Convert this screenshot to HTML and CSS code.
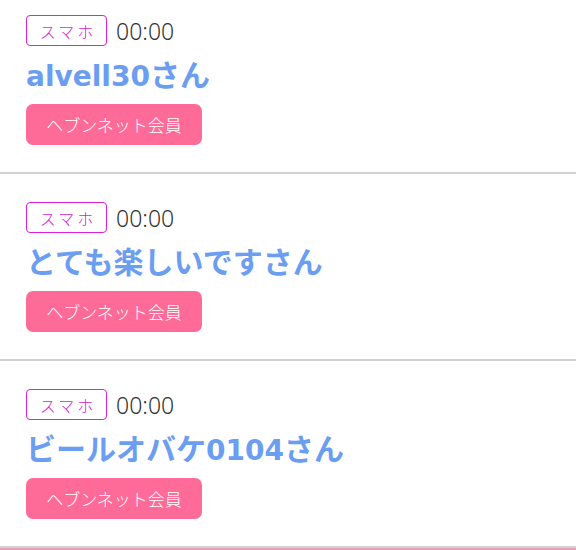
FILE: index.html
```html
<!DOCTYPE html>
<html lang="ja">
<head>
<meta charset="utf-8">
<link rel="stylesheet" href="styles.css">
</head>
<body>
<div class="list">
  <div class="item">
    <div class="meta"><span class="device">スマホ</span><span class="time">00:00</span></div>
    <div class="name"><span class="alnum">alvell30</span>さん</div>
    <div class="member">ヘブンネット会員</div>
  </div>
  <div class="item">
    <div class="meta"><span class="device">スマホ</span><span class="time">00:00</span></div>
    <div class="name">とても楽しいですさん</div>
    <div class="member">ヘブンネット会員</div>
  </div>
  <div class="item">
    <div class="meta"><span class="device">スマホ</span><span class="time">00:00</span></div>
    <div class="name">ビールオバケ<span class="alnum">0104</span>さん</div>
    <div class="member">ヘブンネット会員</div>
  </div>
  <div class="next"></div>
</div>
</body>
</html>
```
FILE: styles.css
```css
html, body {
  margin: 0;
  padding: 0;
  background: #fff;
  overflow: hidden;
}
body {
  font-family: "Noto Sans CJK JP", "Noto Sans", sans-serif;
}
.list {
  margin-top: -13px;
}
.item {
  padding: 28px 26px 27px;
  border-bottom: 2px solid #d2d2d2;
}
.meta {
  display: flex;
  align-items: center;
  gap: 9px;
  height: 31px;
}
.device {
  box-sizing: border-box;
  height: 31px;
  width: 81px;
  display: flex;
  align-items: center;
  justify-content: center;
  border: 1.5px solid #dc1ee0;
  border-radius: 4px;
  color: #d21ed6;
  font-size: 16px;
  font-weight: 300;
  letter-spacing: 3px;
  padding-left: 3px;
}
.time {
  font-size: 23px;
  font-weight: 300;
  color: #333;
  font-family: "Noto Sans", sans-serif;
}
.name {
  margin: 10px 0 14px;
  height: 34px;
  line-height: 34px;
  font-family: "Noto Sans CJK JP", sans-serif;
  font-size: 30px;
  font-weight: 700;
  color: #6b9df0;
}
.alnum {
  font-family: "DejaVu Sans", sans-serif;
  font-size: 28px;
}
.member {
  display: inline-flex;
  align-items: center;
  justify-content: center;
  width: 176px;
  height: 41px;
  border-radius: 7px;
  background: #ff6b98;
  color: #fff;
  font-size: 17px;
  font-weight: 300;
}
.next {
  height: 10px;
  border-top: 2px solid #e6a0b8;
}
```
